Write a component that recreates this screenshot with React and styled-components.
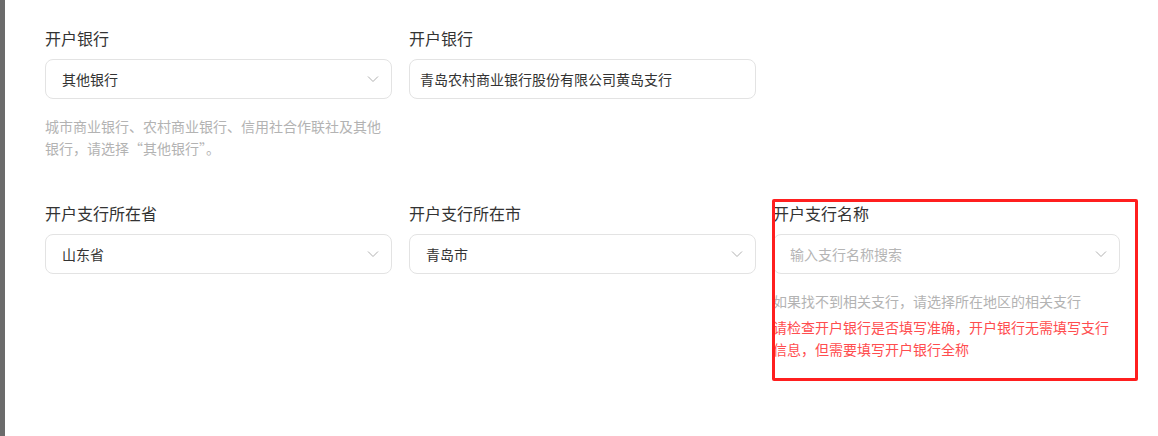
import React from "react";
import styled, { createGlobalStyle } from "styled-components";

const GlobalStyle = createGlobalStyle`
  html, body {
    margin: 0;
    height: 100%;
    background: #fff;
  }
  body {
    font-family: "Noto Sans CJK SC", "Noto Sans", sans-serif;
  }
  #root {
    height: 100%;
  }
`;

const Page = styled.div`
  display: flex;
  height: 100%;
`;

const SideBar = styled.div`
  width: 5px;
  flex-shrink: 0;
  background-color: #6b6b6b;
`;

const Content = styled.div`
  flex: 1;
  padding: 27px 0 0 40px;
`;

const FormGrid = styled.div`
  display: grid;
  grid-template-columns: repeat(3, 347px);
  column-gap: 17px;
  row-gap: 43px;
  align-items: start;
`;

const Field = styled.div`
  position: relative;

  &::after {
    content: "";
    display: ${(props) => (props.highlighted ? "block" : "none")};
    position: absolute;
    top: -3px;
    left: -1px;
    width: 366px;
    height: 182px;
    box-sizing: border-box;
    border: 3px solid #ff1f1f;
    border-radius: 2px;
    pointer-events: none;
  }
`;

const Label = styled.div`
  font-size: 16px;
  line-height: 22px;
  color: #333;
  margin-bottom: 10px;
`;

const Box = styled.div`
  height: 40px;
  box-sizing: border-box;
  border: 1px solid #e3e3e3;
  border-radius: 8px;
  padding: ${(props) => (props.$input ? "0 10px" : "0 12px 0 16px")};
  display: flex;
  align-items: center;
  justify-content: space-between;
  font-size: 14px;
  color: ${(props) => (props.$placeholder ? "#b5b5b5" : "#333")};
`;

const Chevron = styled.svg`
  width: 12px;
  height: 8px;
  flex-shrink: 0;
`;

const Hint = styled.div`
  margin-top: 16px;
  font-size: 14px;
  line-height: 22px;
  color: #b3b3b3;
`;

const ErrorHint = styled(Hint)`
  margin-top: 4px;
  color: #ff4d4f;
`;

const Select = ({ value, placeholder }) => (
  <Box $placeholder={!value}>
    <span>{value || placeholder}</span>
    <Chevron viewBox="0 0 12 8">
      <polyline
        points="1,1.5 6,6.5 11,1.5"
        fill="none"
        stroke="#b0b0b0"
        strokeWidth="1"
      />
    </Chevron>
  </Box>
);

const App = () => (
  <>
    <GlobalStyle />
    <Page>
      <SideBar />
      <Content>
        <FormGrid>
          <Field>
            <Label>开户银行</Label>
            <Select value="其他银行" />
            <Hint>城市商业银行、农村商业银行、信用社合作联社及其他银行，请选择“其他银行”。</Hint>
          </Field>
          <Field>
            <Label>开户银行</Label>
            <Box $input>青岛农村商业银行股份有限公司黄岛支行</Box>
          </Field>
          <Field />
          <Field>
            <Label>开户支行所在省</Label>
            <Select value="山东省" />
          </Field>
          <Field>
            <Label>开户支行所在市</Label>
            <Select value="青岛市" />
          </Field>
          <Field highlighted>
            <Label>开户支行名称</Label>
            <Select placeholder="输入支行名称搜索" />
            <Hint>如果找不到相关支行，请选择所在地区的相关支行</Hint>
            <ErrorHint>请检查开户银行是否填写准确，开户银行无需填写支行信息，但需要填写开户银行全称</ErrorHint>
          </Field>
        </FormGrid>
      </Content>
    </Page>
  </>
);

export default App;
